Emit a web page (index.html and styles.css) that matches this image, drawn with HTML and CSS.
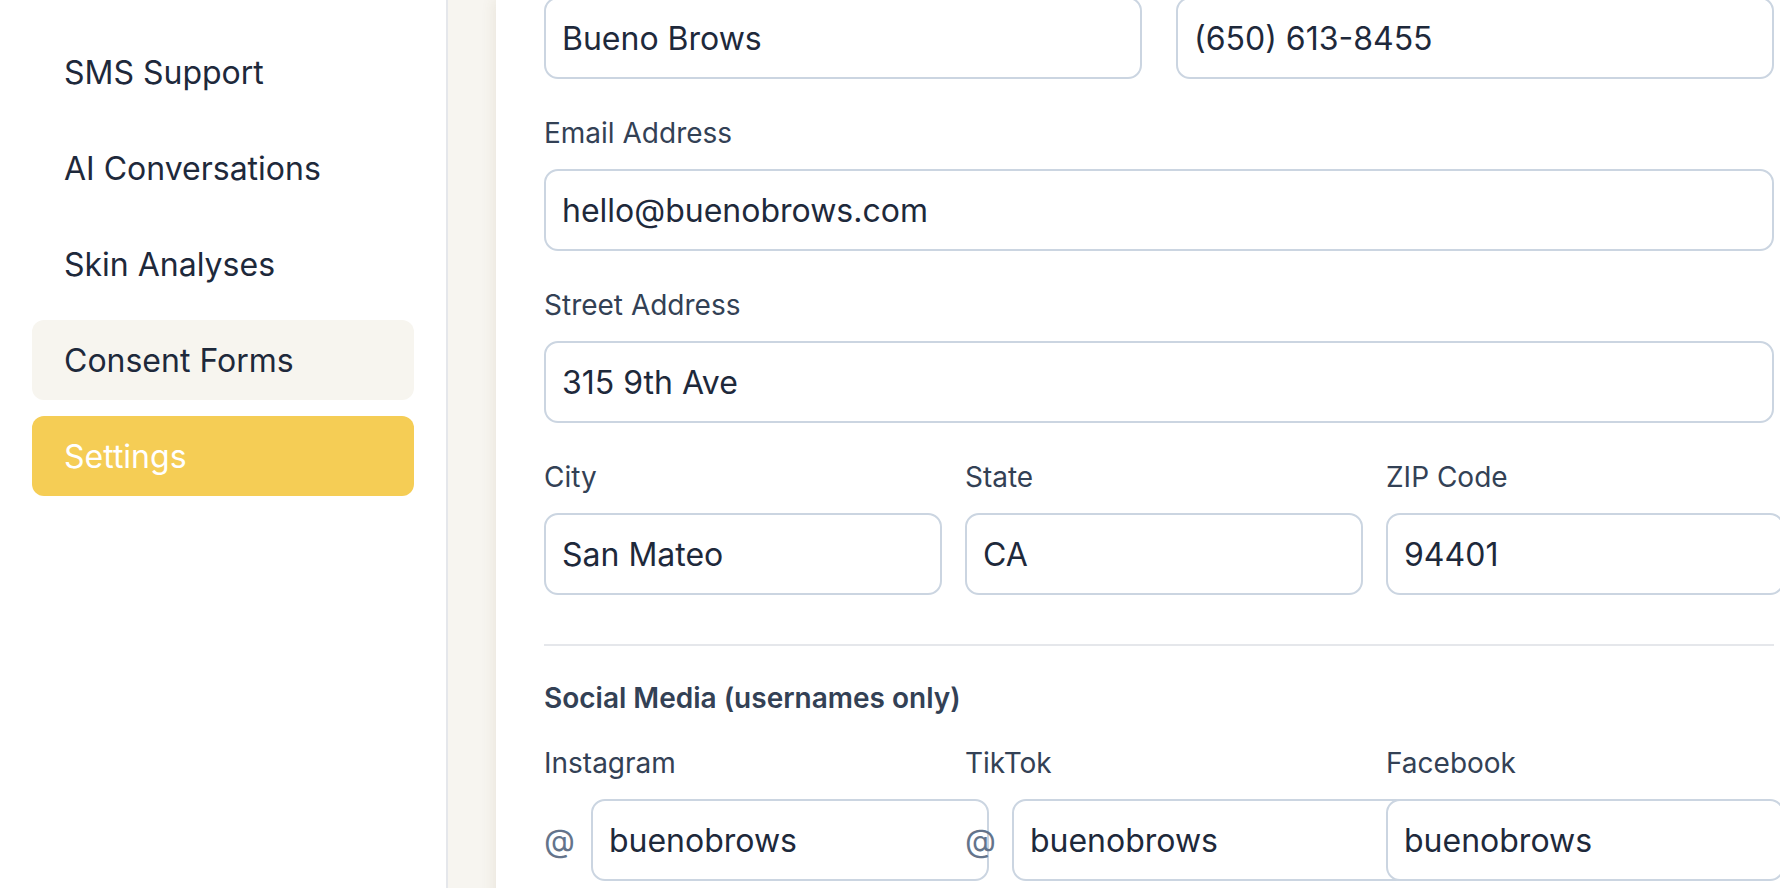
FILE: index.html
```html
<!DOCTYPE html>
<html lang="en">
<head>
<meta charset="utf-8">
<title>Settings – Business Profile</title>
<link rel="stylesheet" href="styles.css">
</head>
<body>
<div class="app">
  <aside class="sidebar">
    <nav class="nav">
      <a class="nav-item" href="#">SMS Support</a>
      <a class="nav-item" href="#">AI Conversations</a>
      <a class="nav-item" href="#">Skin Analyses</a>
      <a class="nav-item nav-item--hover" href="#">Consent Forms</a>
      <a class="nav-item nav-item--active" href="#">Settings</a>
    </nav>
  </aside>
  <main class="main">
    <section class="card">
      <form class="form">
        <div class="row row--2">
          <div class="field">
            <input class="input" type="text" value="Bueno Brows" aria-label="Business Name">
          </div>
          <div class="field">
            <input class="input" type="text" value="(650) 613-8455" aria-label="Phone Number">
          </div>
        </div>
        <div class="field">
          <label class="label">Email Address</label>
          <input class="input" type="text" value="hello@buenobrows.com">
        </div>
        <div class="field">
          <label class="label">Street Address</label>
          <input class="input" type="text" value="315 9th Ave">
        </div>
        <div class="row row--3">
          <div class="field">
            <label class="label">City</label>
            <input class="input" type="text" value="San Mateo">
          </div>
          <div class="field">
            <label class="label">State</label>
            <input class="input" type="text" value="CA">
          </div>
          <div class="field">
            <label class="label">ZIP Code</label>
            <input class="input" type="text" value="94401">
          </div>
        </div>
        <div class="social">
          <h3 class="social-title">Social Media (usernames only)</h3>
          <div class="row row--3">
            <div class="field">
              <label class="label">Instagram</label>
              <div class="handle">
                <span class="at">@</span>
                <input class="input input--fixed" type="text" value="buenobrows">
              </div>
            </div>
            <div class="field">
              <label class="label">TikTok</label>
              <div class="handle">
                <span class="at">@</span>
                <input class="input input--fixed" type="text" value="buenobrows">
              </div>
            </div>
            <div class="field">
              <label class="label">Facebook</label>
              <div class="handle">
                <input class="input input--fixed" type="text" value="buenobrows">
              </div>
            </div>
          </div>
        </div>
      </form>
    </section>
  </main>
</div>
</body>
</html>
```

FILE: styles.css
```css
* {
  box-sizing: border-box;
}

html,
body {
  margin: 0;
  height: 100%;
  overflow: hidden;
}

body {
  font-family: "Inter", "Noto Sans", sans-serif;
  background: #f7f5f0;
  color: #1e293b;
}

.app {
  display: flex;
  height: 888px;
}

/* Sidebar */
.sidebar {
  width: 448px;
  flex-shrink: 0;
  background: #ffffff;
  border-right: 2px solid #e5e7eb;
  padding: 32px 32px 0 32px;
}

.nav {
  display: flex;
  flex-direction: column;
  gap: 16px;
}

.nav-item {
  height: 80px;
  display: flex;
  align-items: center;
  padding: 0 32px;
  border-radius: 12px;
  font-size: 32px;
  color: #1e293b;
  text-decoration: none;
}

.nav-item--hover {
  background: #f7f5ef;
}

.nav-item--active {
  background: #f5cd55;
  color: #ffffff;
}

/* Main */
.main {
  flex: 1;
  min-width: 0;
  padding-left: 48px;
  background: #f7f5f0;
  overflow: hidden;
}

.card {
  display: flow-root;
  width: 1400px;
  min-height: 100%;
  background: #ffffff;
  padding: 0 48px 48px 48px;
  box-shadow: -3px 0 12px rgba(120, 100, 60, 0.09);
}

.form {
  width: 1230px;
  margin-top: -3px;
  display: flex;
  flex-direction: column;
  gap: 34px;
}

.field {
  display: flex;
  flex-direction: column;
  gap: 16px;
  min-width: 0;
}

.label {
  font-size: 28px;
  line-height: 40px;
  color: #334155;
}

.input {
  width: 100%;
  height: 82px;
  border: 2px solid #cbd5e1;
  border-radius: 14px;
  padding: 0 16px;
  font-family: "Inter", "Noto Sans", sans-serif;
  font-size: 32px;
  color: #1e293b;
  background: #ffffff;
  outline: none;
}

.row--2 {
  display: grid;
  grid-template-columns: 1fr 1fr;
  gap: 34px;
}

.row--3 {
  display: grid;
  grid-template-columns: repeat(3, 398px);
  gap: 23px;
}

/* Social */
.social {
  margin-top: 15px;
  border-top: 2px solid #e5e7eb;
  padding-top: 32px;
}

.social-title {
  margin: 0 0 25px 0;
  font-size: 28px;
  line-height: 40px;
  font-weight: 600;
  color: #334155;
}

.handle {
  display: flex;
  align-items: center;
  gap: 16px;
}

.at {
  font-size: 32px;
  color: #64748b;
}

.input--fixed {
  width: 398px;
  flex-shrink: 0;
}
```
